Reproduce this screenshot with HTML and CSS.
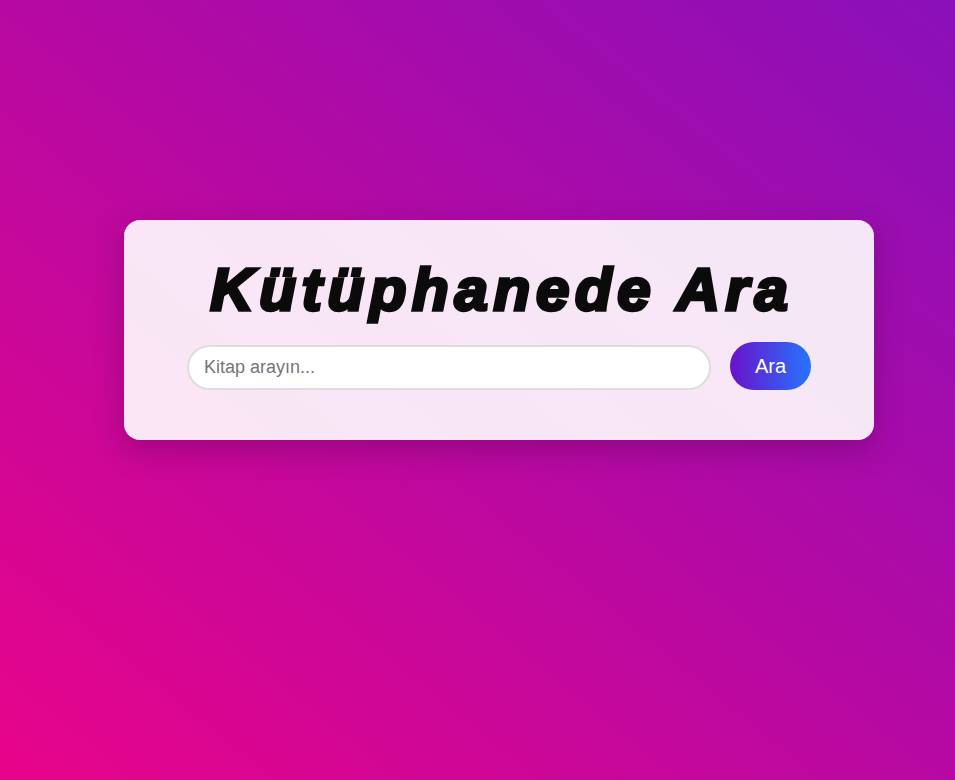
FILE: index.html
```html
<!DOCTYPE html>
<html lang="tr">
<head>
<meta charset="utf-8">
<title>Kütüphanede Ara</title>
<link rel="stylesheet" href="styles.css">
</head>
<body>
  <div class="card">
    <h1 class="title">Kütüphanede Ara</h1>
    <form class="search" onsubmit="return false;">
      <input class="search-input" type="text" placeholder="Kitap arayın...">
      <button class="search-btn" type="submit">Ara</button>
    </form>
  </div>
</body>
</html>
```

FILE: styles.css
```css
html, body {
  margin: 0;
  height: 100%;
}
body {
  background: linear-gradient(to top right, #e8048a 0%, #b709a2 50%, #8a10b9 100%);
  font-family: "Liberation Sans", Arial, sans-serif;
  padding: 220px 0 0 124px;
  box-sizing: border-box;
  overflow: hidden;
}
.card {
  width: 750px;
  box-sizing: border-box;
  padding: 35px 63px 50px;
  background: rgba(255, 255, 255, 0.9);
  border-radius: 16px;
  box-shadow: 0 10px 30px rgba(60, 0, 60, 0.3);
}
.title {
  margin: 0 0 17px;
  text-align: center;
  font-family: "Liberation Sans", Arial, sans-serif;
  font-weight: 700;
  font-style: italic;
  font-size: 60px;
  line-height: 70px;
  letter-spacing: 5.7px;
  padding-left: 6px;
  color: #0b0b0b;
  -webkit-text-stroke: 3.4px #0b0b0b;
}
.search {
  display: flex;
  align-items: center;
  gap: 19px;
  margin: 0;
}
.search-input {
  width: 524px;
  height: 45px;
  box-sizing: border-box;
  margin-top: 2px;
  border: 2px solid #dddddd;
  border-radius: 25px;
  padding: 0 15px;
  font-family: "Liberation Sans", Arial, sans-serif;
  font-size: 18px;
  background: #fff;
  outline: none;
}
.search-input::placeholder {
  color: #757575;
}
.search-btn {
  border: none;
  border-radius: 25px;
  padding: 12px 25px;
  font-family: "Liberation Sans", Arial, sans-serif;
  font-size: 20px;
  line-height: 24px;
  color: #fff;
  background: linear-gradient(to right, #6a11cb, #2575fc);
  cursor: pointer;
}
```
